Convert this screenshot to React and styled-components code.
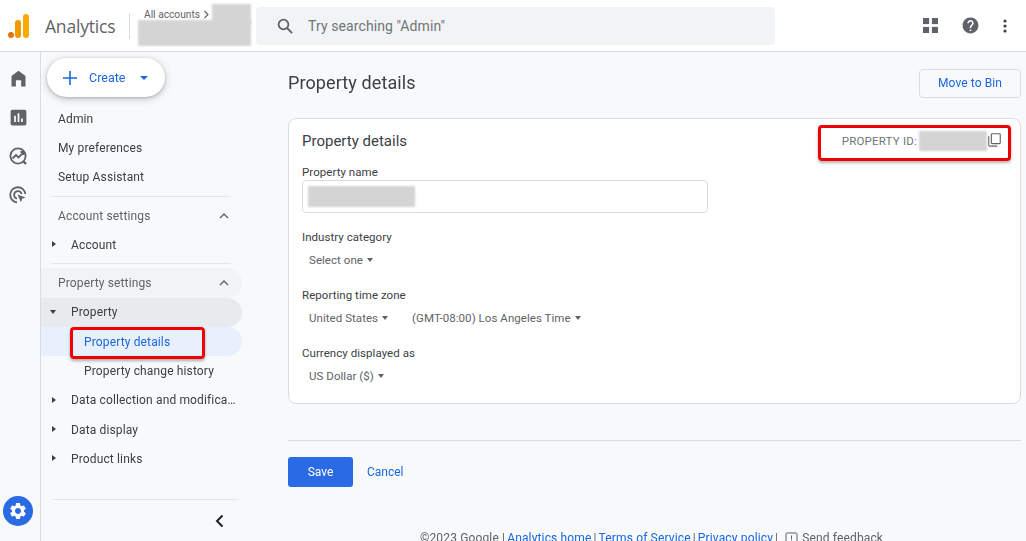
import React from 'react';
import styled, { createGlobalStyle } from 'styled-components';

const GlobalStyle = createGlobalStyle`
  html, body {
    margin: 0;
    padding: 0;
    height: 541px;
    overflow: hidden;
    background: #f8f9fa;
    font-family: Roboto, 'Liberation Sans', sans-serif;
    -webkit-font-smoothing: antialiased;
  }
  * { box-sizing: border-box; }
`;

const Page = styled.div`
  width: 1026px;
  height: 541px;
  display: flex;
  flex-direction: column;
  overflow: hidden;
  filter: blur(0.4px);
`;

// Top bar
const TopBar = styled.header`
  height: 52px;
  flex: none;
  display: flex;
  align-items: center;
  background: #fff;
  border-bottom: 1px solid #dadce0;
  padding-left: 8px;
`;

const LogoName = styled.div`
  font-family: 'Open Sans', sans-serif;
  font-size: 17.5px;
  color: #5f6368;
  margin-left: 16px;
  width: 84px;
  letter-spacing: -0.2px;
`;

const VLine = styled.div`
  width: 1px;
  height: 26px;
  background: #dadce0;
`;

const AccountBox = styled.div`
  position: relative;
  width: 118px;
  height: 52px;
  margin-left: 8px;
  flex: none;
`;

const AccountLabel = styled.div`
  position: absolute;
  left: 6px;
  top: 9px;
  font-size: 10.2px;
  color: #5f6368;
  display: flex;
  align-items: center;
  gap: 3px;
`;

const Redact = styled.div`
  background: #d4d4d4;
  filter: blur(1px);
  width: ${(p) => p.$w}px;
  height: ${(p) => p.$h}px;
  flex: none;
`;

const AccountRedactA = styled(Redact)`
  position: absolute;
  left: 0;
  top: 20px;
`;

const AccountRedactB = styled(Redact)`
  position: absolute;
  left: 74px;
  top: 4px;
`;

const SearchBox = styled.div`
  width: 519px;
  height: 38px;
  background: #f1f3f4;
  border-radius: 4px;
  display: flex;
  align-items: center;
  padding-left: 20px;
  gap: 14px;
  font-size: 14px;
  letter-spacing: 0.1px;
  color: #70757a;
  flex: none;
`;

const TopIcons = styled.div`
  margin-left: auto;
  display: flex;
  align-items: center;
  padding-right: 19px;
  gap: 23px;
`;

// Body
const Body = styled.div`
  flex: 1;
  display: flex;
  min-height: 0;
`;

const Rail = styled.nav`
  width: 41px;
  flex: none;
  border-right: 1px solid #dadce0;
  display: flex;
  flex-direction: column;
  align-items: center;
  padding-top: 14px;
  gap: 15px;
  padding-right: 4px;
  background: #f8f9fa;
`;

const RailIcon = styled.div`
  width: 24px;
  height: 24px;
  display: flex;
  align-items: center;
  justify-content: center;
`;

const SettingsFab = styled.div`
  width: 30px;
  height: 30px;
  border-radius: 50%;
  background: #2a6ae4;
  display: flex;
  align-items: center;
  justify-content: center;
  margin-top: auto;
  margin-bottom: 15px;
`;

const Side = styled.aside`
  width: 201px;
  flex: none;
  display: flex;
  flex-direction: column;
`;

const CreateButton = styled.div`
  width: 118px;
  height: 39px;
  margin: 6px 0 0 6px;
  background: #fff;
  border-radius: 20px;
  box-shadow: 0 1px 3px rgba(60, 64, 67, 0.3), 0 2px 6px 2px rgba(60, 64, 67, 0.15);
  display: flex;
  align-items: center;
  padding-left: 16px;
  color: #1a66e0;
  font-size: 12.5px;
  flex: none;
`;

const CreateText = styled.span`
  margin-left: 12px;
`;

const CreateCaret = styled.span`
  margin-left: 15px;
  width: 0;
  height: 0;
  border-left: 4px solid transparent;
  border-right: 4px solid transparent;
  border-top: 4.5px solid #1a66e0;
`;

const SideList = styled.div`
  margin-top: 7px;
  display: flex;
  flex-direction: column;
`;

const Row = styled.div`
  height: 29.3px;
  flex: none;
  display: flex;
  align-items: center;
  font-size: 12px;
  letter-spacing: 0.14px;
  color: ${(p) => (p.$active ? '#1a66e0' : p.$muted ? '#5f6368' : '#3c4043')};
  padding-left: ${(p) => p.$indent || 17}px;
  padding-right: 6px;
  border-radius: 0 15px 15px 0;
  background: ${(p) => p.$bg || 'transparent'};
  position: relative;
`;

const RowLabel = styled.span`
  flex: 1;
  white-space: nowrap;
  overflow: hidden;
  text-overflow: ellipsis;
`;

const RowChevron = styled.span`
  display: flex;
  margin-right: 6px;
`;

const Tree = styled.span`
  position: absolute;
  left: ${(p) => (p.$open ? 9 : 11)}px;
  top: 50%;
  margin-top: ${(p) => (p.$open ? -2 : -3.5)}px;
  width: 0;
  height: 0;
  ${(p) =>
    p.$open
      ? `border-left: 3.5px solid transparent;
         border-right: 3.5px solid transparent;
         border-top: 4px solid #3c4043;`
      : `border-top: 3.5px solid transparent;
         border-bottom: 3.5px solid transparent;
         border-left: 4px solid #3c4043;`}
`;

const SideLine = styled.div`
  height: 1px;
  background: #e3e5e8;
  margin: ${(p) => p.$m || '4px 11px 4px 10px'};
  flex: none;
`;

const SideFoot = styled.div`
  margin-top: auto;
  display: flex;
  flex-direction: column;
`;

const Collapse = styled.div`
  height: 41px;
  display: flex;
  align-items: center;
  justify-content: flex-end;
  padding-right: 15px;
`;

const Marked = styled.div`
  position: absolute;
  border: 3px solid #f00000;
  border-radius: 4px;
  box-shadow: 0 2px 3px rgba(0, 0, 0, 0.3);
  pointer-events: none;
`;

const NavMark = styled(Marked)`
  left: 29px;
  top: 0;
  width: 135px;
  height: 32px;
`;

// Main column
const Main = styled.main`
  flex: 1;
  padding: 16px 5px 0 46px;
  min-width: 0;
  display: flex;
  flex-direction: column;
`;

const TitleRow = styled.div`
  display: flex;
  align-items: center;
  justify-content: space-between;
  height: 30px;
  flex: none;
`;

const Title = styled.h1`
  margin: 0 0 2px;
  font-size: 18px;
  font-weight: 400;
  color: #3c4043;
  letter-spacing: 0.1px;
`;

const OutlineButton = styled.div`
  width: 102px;
  height: 29px;
  border: 1px solid #dadce0;
  border-radius: 4px;
  display: flex;
  align-items: center;
  justify-content: center;
  font-size: 12px;
  color: #1a66e0;
  letter-spacing: 0.1px;
`;

const Card = styled.section`
  position: relative;
  margin-top: 20px;
  height: 286px;
  flex: none;
  background: #fff;
  border: 1px solid #dadce0;
  border-radius: 8px;
  padding: 12px 13px 0;
`;

const CardHead = styled.div`
  display: flex;
  align-items: center;
  justify-content: space-between;
  height: 20px;
`;

const CardTitle = styled.h2`
  margin: 0;
  font-size: 15px;
  font-weight: 400;
  color: #3c4043;
`;

const PropId = styled.div`
  position: relative;
  display: flex;
  align-items: center;
  font-size: 11.5px;
  color: #70757a;
  letter-spacing: 0.2px;
  margin-right: 6px;
`;

const IdRedact = styled(Redact)`
  margin: 0 1px 0 2px;
`;

const CopyWrap = styled.span`
  display: flex;
  margin-top: -3px;
`;

const IdMark = styled(Marked)`
  right: -10px;
  top: -6px;
  width: 193px;
  height: 36px;
`;

const FieldLabel = styled.div`
  font-size: 11.5px;
  letter-spacing: 0.05px;
  color: #3c4043;
  line-height: 14px;
`;

const Field = styled.div`
  margin-top: ${(p) => p.$top}px;
`;

const TextInput = styled.div`
  width: 406px;
  height: 33px;
  margin-top: 1px;
  border: 1px solid #dadce0;
  border-radius: 4px;
  display: flex;
  align-items: center;
  padding-left: 5px;
`;

const Selects = styled.div`
  display: flex;
  gap: 24px;
  margin-top: 8px;
  padding-left: 7px;
  height: 16px;
  align-items: center;
`;

const Select = styled.div`
  display: flex;
  align-items: center;
  gap: 4px;
  font-size: 11.5px;
  letter-spacing: 0.05px;
  color: #5f6368;
  &::after {
    content: '';
    width: 0;
    height: 0;
    border-left: 3.5px solid transparent;
    border-right: 3.5px solid transparent;
    border-top: 4px solid #5f6368;
  }
`;

const HLine = styled.hr`
  margin: 36px 0 0;
  border: 0;
  height: 1px;
  background: #dadce0;
  flex: none;
`;

const Actions = styled.div`
  display: flex;
  align-items: center;
  margin-top: 16px;
  gap: 14px;
  flex: none;
`;

const SaveButton = styled.div`
  width: 65px;
  height: 30px;
  background: #2a6ae4;
  border-radius: 3px;
  color: #fff;
  font-size: 12px;
  display: flex;
  align-items: center;
  justify-content: center;
`;

const TextLink = styled.span`
  color: #1a66e0;
  font-size: 12px;
`;

const Footer = styled.div`
  margin-top: 44px;
  display: flex;
  align-items: center;
  justify-content: center;
  gap: 2px;
  font-size: 12px;
  letter-spacing: 0.15px;
  color: #5f6368;
  white-space: nowrap;
  padding-right: 6px;
`;

const FooterGap = styled.span`
  display: flex;
  margin: 0 2px 0 5px;
`;

const I = ({ size = 24, color = '#5f6368', d }) => (
  <svg width={size} height={size} viewBox="0 0 24 24" fill={color}>
    <path d={d} />
  </svg>
);

const AnalyticsLogo = () => (
  <svg width="21" height="24" viewBox="0 0 21 24">
    <circle cx="3" cy="21" r="3" fill="#e8710a" />
    <rect x="7" y="6" width="6" height="18" rx="3" fill="#f29900" />
    <rect x="15" y="0" width="6" height="24" rx="3" fill="#f9ab00" />
  </svg>
);

const SearchIcon = () => (
  <svg width="18" height="18" viewBox="0 0 24 24" fill="none" stroke="#5f6368" strokeWidth="2.4">
    <circle cx="10" cy="10" r="6.5" />
    <path d="M15 15l6.5 6.5" />
  </svg>
);

const Copy = () => (
  <svg width="13" height="14" viewBox="0 0 14 15" fill="none" stroke="#5f6368" strokeWidth="1.2">
    <rect x="3.6" y="0.8" width="9.6" height="10.6" rx="1" />
    <path d="M0.8 3.5v9.4a1.2 1.2 0 0 0 1.2 1.2h8" />
  </svg>
);

const ChevronUp = () => (
  <svg width="12" height="12" viewBox="0 0 12 12" fill="none" stroke="#5f6368" strokeWidth="1.4">
    <path d="M2 8l4-4 4 4" />
  </svg>
);

const ChevronLeft = () => (
  <svg width="14" height="14" viewBox="0 0 14 14" fill="none" stroke="#202124" strokeWidth="2">
    <path d="M9.5 1.5L4 7l5.5 5.5" />
  </svg>
);

const paths = {
  home: 'M12 3L4 9v12h5v-7h6v7h5V9z',
  bars: 'M19 3H5c-1.1 0-2 .9-2 2v14c0 1.1.9 2 2 2h14c1.1 0 2-.9 2-2V5c0-1.1-.9-2-2-2zM9 17H7v-7h2v7zm4 0h-2V7h2v10zm4 0h-2v-4h2v4z',
  gear: 'M19.14 12.94c.04-.3.06-.61.06-.94 0-.32-.02-.64-.07-.94l2.03-1.58a.49.49 0 0 0 .12-.61l-1.92-3.32a.488.488 0 0 0-.59-.22l-2.39.96c-.5-.38-1.03-.7-1.62-.94l-.36-2.54a.484.484 0 0 0-.48-.41h-3.84c-.24 0-.43.17-.47.41l-.36 2.54c-.59.24-1.13.57-1.62.94l-2.39-.96c-.22-.08-.47 0-.59.22L2.74 8.87c-.12.21-.08.47.12.61l2.03 1.58c-.05.3-.09.63-.09.94s.02.64.07.94l-2.03 1.58a.49.49 0 0 0-.12.61l1.92 3.32c.12.22.37.29.59.22l2.39-.96c.5.38 1.03.7 1.62.94l.36 2.54c.05.24.24.41.48.41h3.84c.24 0 .44-.17.47-.41l.36-2.54c.59-.24 1.13-.56 1.62-.94l2.39.96c.22.08.47 0 .59-.22l1.92-3.32c.12-.22.07-.47-.12-.61l-2.01-1.58zM12 15.6c-1.98 0-3.6-1.62-3.6-3.6s1.62-3.6 3.6-3.6 3.6 1.62 3.6 3.6-1.62 3.6-3.6 3.6z',
  help: 'M12 2C6.48 2 2 6.48 2 12s4.48 10 10 10 10-4.48 10-10S17.52 2 12 2zm1 17h-2v-2h2v2zm2.07-7.75l-.9.92C13.45 12.9 13 13.5 13 15h-2v-.5c0-1.1.45-2.1 1.17-2.83l1.24-1.26c.37-.36.59-.86.59-1.41 0-1.1-.9-2-2-2s-2 .9-2 2H8c0-2.21 1.79-4 4-4s4 1.79 4 4c0 .88-.36 1.68-.93 2.25z',
};

const Reports = () => (
  <svg width="20" height="20" viewBox="0 0 20 20" fill="none" stroke="#5f6368" strokeWidth="1.8">
    <circle cx="10" cy="10" r="7.6" />
    <path d="M4.5 12.5l3.5-3.5 2.5 2.5 5-5M12.5 6h3v3" />
    <path d="M15 15l3 3" strokeWidth="2.4" />
  </svg>
);

const Advertising = () => (
  <svg width="20" height="20" viewBox="0 0 20 20" fill="none" stroke="#5f6368" strokeWidth="1.8">
    <path d="M9 17.4A7.6 7.6 0 1 1 17.4 9" />
    <path d="M9 13.6A3.8 3.8 0 1 1 13.6 9" />
    <path d="M9.5 9.5l8 3-3.3 1.3-1.3 3.5z" fill="#5f6368" stroke="none" />
  </svg>
);

const Grid = () => (
  <svg width="15" height="15" viewBox="0 0 16 16" fill="#5f6368">
    <rect x="0" y="0" width="6.5" height="6.5" />
    <rect x="9.5" y="0" width="6.5" height="6.5" />
    <rect x="0" y="9.5" width="6.5" height="6.5" />
    <rect x="9.5" y="9.5" width="6.5" height="6.5" />
  </svg>
);

const Dots = () => (
  <svg width="4" height="14" viewBox="0 0 4 14" fill="#3c4043">
    <circle cx="2" cy="2" r="1.6" />
    <circle cx="2" cy="7" r="1.6" />
    <circle cx="2" cy="12" r="1.6" />
  </svg>
);

const FeedbackIcon = () => (
  <svg width="13" height="13" viewBox="0 0 13 13" fill="none" stroke="#5f6368" strokeWidth="1">
    <rect x="1" y="1" width="11" height="10" rx="1" />
    <path d="M6.5 3.5v4M6.5 8.5v1" />
  </svg>
);

const Plus = () => (
  <svg width="14" height="14" viewBox="0 0 14 14" stroke="#1a66e0" strokeWidth="1.6">
    <path d="M7 0v14M0 7h14" />
  </svg>
);

const App = () => {
  return (
    <Page>
      <GlobalStyle />
      <TopBar>
        <AnalyticsLogo />
        <LogoName>Analytics</LogoName>
        <VLine />
        <AccountBox>
          <AccountRedactB $w={39} $h={20} />
          <AccountRedactA $w={113} $h={26} />
          <AccountLabel>
            All accounts
            <svg width="7" height="9" viewBox="0 0 7 9" fill="none" stroke="#5f6368" strokeWidth="1.1">
              <path d="M1.5 1l3.5 3.5L1.5 8" />
            </svg>
          </AccountLabel>
        </AccountBox>
        <SearchBox>
          <SearchIcon />
          Try searching "Admin"
        </SearchBox>
        <TopIcons>
          <Grid />
          <I size={19} d={paths.help} />
          <Dots />
        </TopIcons>
      </TopBar>
      <Body>
        <Rail>
          <RailIcon><I size={21} d={paths.home} /></RailIcon>
          <RailIcon><I size={21} d={paths.bars} /></RailIcon>
          <RailIcon><Reports /></RailIcon>
          <RailIcon><Advertising /></RailIcon>
          <SettingsFab><I size={20} color="#fff" d={paths.gear} /></SettingsFab>
        </Rail>
        <Side>
          <CreateButton>
            <Plus />
            <CreateText>Create</CreateText>
            <CreateCaret />
          </CreateButton>
          <SideList>
            <Row><RowLabel>Admin</RowLabel></Row>
            <Row><RowLabel>My preferences</RowLabel></Row>
            <Row><RowLabel>Setup Assistant</RowLabel></Row>
            <SideLine />
            <Row $muted><RowLabel>Account settings</RowLabel><RowChevron><ChevronUp /></RowChevron></Row>
            <Row $indent={30}><Tree /><RowLabel>Account</RowLabel></Row>
            <SideLine />
            <Row $muted $bg="#f1f3f4"><RowLabel>Property settings</RowLabel><RowChevron><ChevronUp /></RowChevron></Row>
            <Row $indent={30} $bg="#e8eaed"><Tree $open /><RowLabel>Property</RowLabel></Row>
            <Row $indent={43} $active $bg="#e8f0fe">
              <RowLabel>Property details</RowLabel>
              <NavMark />
            </Row>
            <Row $indent={43}><RowLabel>Property change history</RowLabel></Row>
            <Row $indent={30}><Tree /><RowLabel>Data collection and modification</RowLabel></Row>
            <Row $indent={30}><Tree /><RowLabel>Data display</RowLabel></Row>
            <Row $indent={30}><Tree /><RowLabel>Product links</RowLabel></Row>
          </SideList>
          <SideFoot>
            <SideLine $m="0 3px 0 11px" />
            <Collapse><ChevronLeft /></Collapse>
          </SideFoot>
        </Side>
        <Main>
          <TitleRow>
            <Title>Property details</Title>
            <OutlineButton>Move to Bin</OutlineButton>
          </TitleRow>
          <Card>
            <CardHead>
              <CardTitle>Property details</CardTitle>
              <PropId>
                PROPERTY ID:
                <IdRedact $w={68} $h={20} />
                <CopyWrap><Copy /></CopyWrap>
                <IdMark />
              </PropId>
            </CardHead>
            <Field $top={14}>
              <FieldLabel>Property name</FieldLabel>
              <TextInput><Redact $w={107} $h={21} /></TextInput>
            </Field>
            <Field $top={17}>
              <FieldLabel>Industry category</FieldLabel>
              <Selects><Select>Select one</Select></Selects>
            </Field>
            <Field $top={20}>
              <FieldLabel>Reporting time zone</FieldLabel>
              <Selects>
                <Select>United States</Select>
                <Select>(GMT-08:00) Los Angeles Time</Select>
              </Selects>
            </Field>
            <Field $top={20}>
              <FieldLabel>Currency displayed as</FieldLabel>
              <Selects><Select>US Dollar ($)</Select></Selects>
            </Field>
          </Card>
          <HLine />
          <Actions>
            <SaveButton>Save</SaveButton>
            <TextLink>Cancel</TextLink>
          </Actions>
          <Footer>
            ©2023 Google | <TextLink>Analytics home</TextLink> | <TextLink>Terms of Service</TextLink> | <TextLink>Privacy policy</TextLink> |
            <FooterGap><FeedbackIcon /></FooterGap>
            Send feedback
          </Footer>
        </Main>
      </Body>
    </Page>
  );
};

export default App;
